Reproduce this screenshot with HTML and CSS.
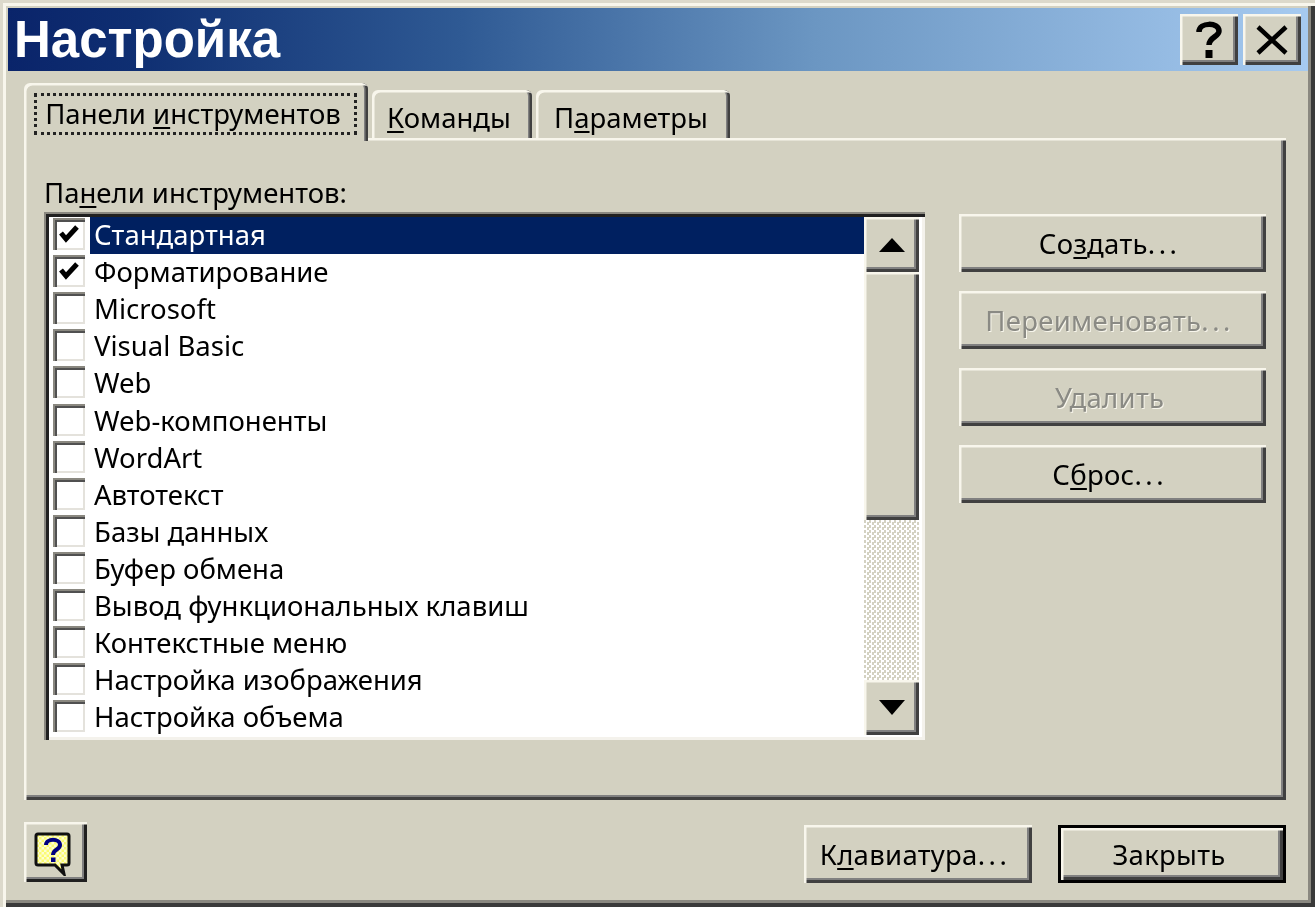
FILE: index.html
```html
<!DOCTYPE html>
<html lang="ru">
<head>
<meta charset="utf-8">
<title>Настройка</title>
<link rel="stylesheet" href="styles.css">
</head>
<body>
<div class="dialog">
  <header class="titlebar">
    <h1 class="title">Настройка</h1>
    <div class="caption-buttons">
      <button class="caption-btn" aria-label="Справка">
        <svg width="26" height="37" viewBox="0 0 26 37"><path d="M3 11 C3 1 23 1 23 10 C23 16 13 16 13 24" fill="none" stroke="#000" stroke-width="5.500"/><rect x="9.500" y="29" width="7" height="8" fill="#000"/></svg>
      </button>
      <button class="caption-btn" aria-label="Закрыть">
        <svg width="32" height="30" viewBox="0 0 32 30"><path d="M2 2 L30 28 M30 2 L2 28" fill="none" stroke="#000" stroke-width="4.500"/></svg>
      </button>
    </div>
  </header>
  <div class="content">
    <div class="tabs">
      <div class="tab tab-active"><span class="tab-focus">Панели <u>и</u>нструментов</span></div>
      <div class="tab tab-second"><span><u>К</u>оманды</span></div>
      <div class="tab tab-third"><span>П<u>а</u>раметры</span></div>
    </div>
    <section class="panel">
      <div class="list-label">Па<u>н</u>ели инструментов:</div>
      <div class="panel-body">
        <div class="listbox">
          <div class="rows">
            <div class="row"><span class="check"><svg width="26" height="24" viewBox="0 0 26 24"><path d="M5 11 L10 17 L21 5" fill="none" stroke="#000" stroke-width="5"/></svg></span><span class="row-text selected">Стандартная</span></div>
            <div class="row"><span class="check"><svg width="26" height="24" viewBox="0 0 26 24"><path d="M5 11 L10 17 L21 5" fill="none" stroke="#000" stroke-width="5"/></svg></span><span class="row-text">Форматирование</span></div>
            <div class="row"><span class="check"></span><span class="row-text">Microsoft</span></div>
            <div class="row"><span class="check"></span><span class="row-text">Visual Basic</span></div>
            <div class="row"><span class="check"></span><span class="row-text">Web</span></div>
            <div class="row"><span class="check"></span><span class="row-text">Web-компоненты</span></div>
            <div class="row"><span class="check"></span><span class="row-text">WordArt</span></div>
            <div class="row"><span class="check"></span><span class="row-text">Автотекст</span></div>
            <div class="row"><span class="check"></span><span class="row-text">Базы данных</span></div>
            <div class="row"><span class="check"></span><span class="row-text">Буфер обмена</span></div>
            <div class="row"><span class="check"></span><span class="row-text">Вывод функциональных клавиш</span></div>
            <div class="row"><span class="check"></span><span class="row-text">Контекстные меню</span></div>
            <div class="row"><span class="check"></span><span class="row-text">Настройка изображения</span></div>
            <div class="row"><span class="check"></span><span class="row-text">Настройка объема</span></div>
          </div>
          <div class="scrollbar">
            <div class="sb-btn sb-up"><svg width="26" height="14" viewBox="0 0 26 14"><path d="M13 0 L26 14 L0 14 Z" fill="#000"/></svg></div>
            <div class="sb-thumb"></div>
            <div class="sb-track"></div>
            <div class="sb-btn sb-down"><svg width="26" height="15" viewBox="0 0 26 15"><path d="M0 0 L26 0 L13 15 Z" fill="#000"/></svg></div>
          </div>
        </div>
        <div class="side">
          <button class="btn">Со<u>з</u>дать<span class="dots">...</span></button>
          <button class="btn btn-disabled">Переименовать<span class="dots">...</span></button>
          <button class="btn btn-disabled">Удалить</button>
          <button class="btn">С<u>б</u>рос<span class="dots">...</span></button>
        </div>
      </div>
    </section>
    <footer class="footer">
      <button class="btn help-btn" aria-label="Справка">
        <svg width="38" height="44" viewBox="0 0 38 44">
          <defs>
            <pattern id="dither" width="5" height="5" patternUnits="userSpaceOnUse">
              <rect width="5" height="5" fill="#fdfdd0"/>
              <rect width="2.500" height="2.500" fill="#fbfb70"/>
              <rect x="2.500" y="2.500" width="2.500" height="2.500" fill="#fbfb70"/>
            </pattern>
          </defs>
          <path d="M4 2 H33 Q35 2 35 4 V31 Q35 33 33 33 H28 L30 42 L21 33 H4 Q2 33 2 31 V4 Q2 2 4 2 Z" fill="url(#dither)" stroke="#101010" stroke-width="3"/>
          <path d="M12 13 C12 6 26 6 26 13 C26 18 19 17 19 23" fill="none" stroke="#000080" stroke-width="4"/>
          <rect x="17" y="25.500" width="4.500" height="4.500" fill="#000080"/>
        </svg>
      </button>
      <div class="footer-actions">
        <button class="btn btn-wide">К<u>л</u>авиатура<span class="dots">...</span></button>
        <button class="btn btn-wide btn-default">Закрыть</button>
      </div>
    </footer>
  </div>
</div>
</body>
</html>
```
FILE: styles.css
```css
* { box-sizing: border-box; }
html, body { margin: 0; padding: 0; }
body {
  width: 1315px;
  height: 907px;
  overflow: hidden;
  background: #d3d1c1;
  font-family: "Noto Sans", "DejaVu Sans", sans-serif;
  font-size: 27.5px;
  color: #000;
}
button { font: inherit; color: inherit; padding: 0; border: 0; background: #d3d1c1; }
u { text-underline-offset: 3px; text-decoration-thickness: 2px; }

.dialog {
  width: 1315px;
  height: 907px;
  padding: 8px 7px 0 8px;
  background: #d3d1c1;
  box-shadow:
    inset 3px 3px 0 #dcd9cb,
    inset 6px 6px 0 #f8f6ec,
    inset -4px -4px 0 #3a3a3a,
    inset -7px -7px 0 #8a8880;
  filter: blur(0.7px);
}

.titlebar {
  height: 63px;
  display: flex;
  align-items: center;
  justify-content: space-between;
  padding: 0 7px 0 6px;
  background: linear-gradient(90deg, #0a246a 0%, #0f2f72 10%, #2f5a94 35%, #6b96c2 62%, #a6caf0 100%);
}
.title {
  margin: 0;
  font-family: "Liberation Sans", Arial, sans-serif;
  font-weight: 700;
  font-size: 51px;
  line-height: 1;
  color: #fff;
}
.caption-buttons { display: flex; gap: 5px; }
.caption-btn {
  width: 58px;
  height: 51px;
  display: flex;
  align-items: center;
  justify-content: center;
  box-shadow:
    inset 2.500px 2.500px 0 #f8f6ec,
    inset -3px -3px 0 #404040,
    inset -5px -5px 0 #808080;
}

.content { padding: 12px 22px 0 16px; }

.tabs {
  display: flex;
  align-items: flex-end;
  height: 55px;
  position: relative;
  z-index: 1;
}
.tab {
  height: 48px;
  padding-top: 6px;
  display: flex;
  justify-content: center;
  align-items: center;
  border-radius: 6px 6px 0 0;
  box-shadow:
    inset 2.500px 2.500px 0 #f8f6ec,
    inset -2.500px 0 0 #404040,
    inset -4px 0 0 #808080;
}
.tab-active {
  width: 344px;
  height: 58px;
  margin-bottom: -3px;
  padding: 3px 1px 0 0;
  background: #d3d1c1;
  margin-right: 4px;
}
.tab-focus {
  display: block;
  width: 323px;
  height: 42px;
  line-height: 42px;
  padding-right: 5px;
  text-align: center;
  outline: 3px dotted #222;
  outline-offset: -3px;
}
.tab-second { width: 160px; margin-right: 4px; padding-right: 6px; }
.tab-third { width: 194px; padding-right: 4px; }

.panel {
  height: 662px;
  padding: 38px 20px 0 20px;
  box-shadow:
    inset 2.500px 2.500px 0 #f8f6ec,
    inset -3px -3px 0 #404040,
    inset -5px -5px 0 #808080;
}
.list-label { height: 36px; line-height: 34px; }
.panel-body { display: flex; gap: 34px; align-items: flex-start; }

.listbox {
  width: 882px;
  height: 528px;
  padding: 5px 6px 5px 9px;
  display: flex;
  background: #fff;
  box-shadow:
    inset 2px 2px 0 #8a8880,
    inset 5px 5px 0 #202020,
    inset -3px -3px 0 #f4f2ec;
}
.rows { flex: 1; min-width: 0; }
.row { height: 37.1px; display: flex; align-items: center; gap: 5px; }
.check {
  flex: none;
  width: 32px;
  height: 32px;
  margin-top: -3px;
  display: flex;
  align-items: center;
  justify-content: center;
  background: #fff;
  box-shadow:
    inset 2px 2px 0 #8a8880,
    inset 4px 4px 0 #505050,
    inset -2px -2px 0 #e4e2dc;
}
.row-text {
  flex: 1;
  height: 37px;
  line-height: 36px;
  padding-left: 4px;
  white-space: nowrap;
}
.selected { background: #002060; color: #fff; }

.scrollbar { width: 55px; flex: none; display: flex; flex-direction: column; }
.sb-btn, .sb-thumb {
  background: #d3d1c1;
  box-shadow:
    inset 2.500px 2.500px 0 #f8f6ec,
    inset -3px -3px 0 #404040,
    inset -5px -5px 0 #808080;
}
.sb-btn { display: flex; align-items: center; justify-content: center; }
.sb-up { height: 55px; flex: none; }
.sb-thumb { height: 248px; flex: none; }
.sb-track {
  flex: 1;
  background: repeating-conic-gradient(#fff 0 25%, #d3d1c1 0 50%) 0 0 / 5px 5px;
}
.sb-down { height: 55px; flex: none; }

.side {
  width: 307px;
  display: flex;
  flex-direction: column;
  gap: 19px;
  padding-top: 2px;
}
.btn {
  display: flex;
  align-items: center;
  justify-content: center;
  height: 58px;
  padding-right: 6px;
  letter-spacing: 0.3px;
  box-shadow:
    inset 2.500px 2.500px 0 #f8f6ec,
    inset -3px -3px 0 #404040,
    inset -5px -5px 0 #808080;
}
.dots { letter-spacing: 3.5px; }
.btn-disabled { color: #8a8a84; text-shadow: 1px 1px 0 #f8f6ec; }

.footer {
  display: flex;
  justify-content: space-between;
  align-items: flex-start;
  margin-top: 22px;
}
.help-btn {
  width: 63px;
  height: 60px;
  padding: 4px 5px 0 0;
  box-shadow:
    inset 2.500px 2.500px 0 #f8f6ec,
    inset -3px -3px 0 #202020,
    inset -5px -5px 0 #808080;
}
.footer-actions { display: flex; gap: 26px; margin-top: 3px; }
.btn-wide { width: 228px; }
.btn-default {
  box-shadow:
    inset 0 0 0 3px #000,
    inset 5.500px 5.500px 0 #f8f6ec,
    inset -6px -6px 0 #404040,
    inset -8px -8px 0 #808080;
}
```
